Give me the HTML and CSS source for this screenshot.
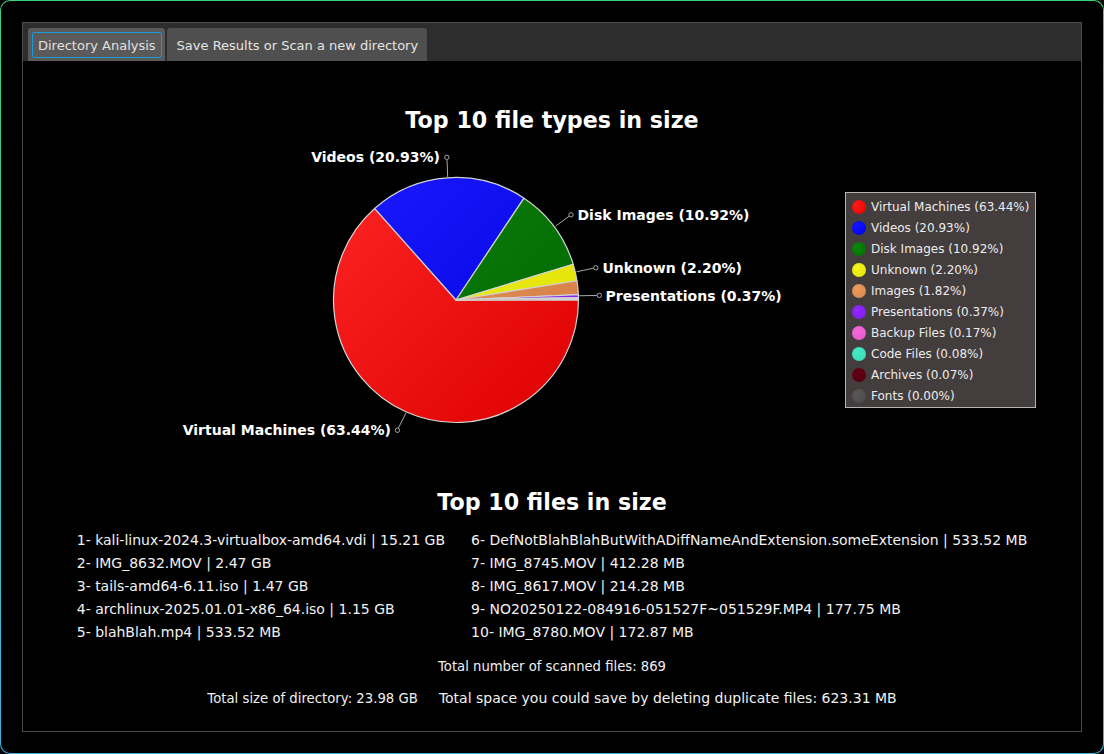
FILE: index.html
```html
<!DOCTYPE html>
<html lang="en">
<head>
<meta charset="utf-8">
<title>Directory Analysis</title>
<link rel="stylesheet" href="styles.css">
</head>
<body>
<div class="window">
  <div class="window-inner">
    <div class="tabwidget">
      <div class="tabbar">
        <div class="tab tab-active"><span class="focus">Directory Analysis</span></div>
        <div class="tab">Save Results or Scan a new directory</div>
      </div>
      <div class="pane">
        <h2 class="chart-title">Top 10 file types in size</h2>
        <div class="chart">
          <svg class="pie" width="1058" height="356" viewBox="0 0 1058 356" xmlns="http://www.w3.org/2000/svg">
            <defs>
              <linearGradient id="gRed" gradientUnits="userSpaceOnUse" x1="333" y1="177" x2="579" y2="423"><stop offset="0" stop-color="#ff2424"/><stop offset="1" stop-color="#dc0000"/></linearGradient>
              <linearGradient id="gBlue" gradientUnits="userSpaceOnUse" x1="333" y1="177" x2="579" y2="423"><stop offset="0" stop-color="#1a1aff"/><stop offset="1" stop-color="#0000dc"/></linearGradient>
              <linearGradient id="gGreen" gradientUnits="userSpaceOnUse" x1="333" y1="177" x2="579" y2="423"><stop offset="0" stop-color="#0c840c"/><stop offset="1" stop-color="#006400"/></linearGradient>
              <linearGradient id="gYellow" gradientUnits="userSpaceOnUse" x1="333" y1="177" x2="579" y2="423"><stop offset="0" stop-color="#f6f628"/><stop offset="1" stop-color="#dede00"/></linearGradient>
              <linearGradient id="gOrange" gradientUnits="userSpaceOnUse" x1="333" y1="177" x2="579" y2="423"><stop offset="0" stop-color="#ec9a60"/><stop offset="1" stop-color="#d07a40"/></linearGradient>
            </defs>
            <g transform="translate(-23 -133)">
              <g class="slices" stroke="#d2d2d2" stroke-width="1.2" stroke-linejoin="round">
                <path fill="url(#gRed)" d="M456,300 L578.5,300 A122.5,122.5 0 1 1 374.62,208.43 Z"/>
                <path fill="url(#gBlue)" d="M456,300 L374.62,208.43 A122.5,122.5 0 0 1 524.05,198.14 Z"/>
                <path fill="url(#gGreen)" d="M456,300 L524.05,198.14 A122.5,122.5 0 0 1 573.18,264.28 Z"/>
                <path fill="url(#gYellow)" d="M456,300 L573.18,264.28 A122.5,122.5 0 0 1 576.98,280.76 Z"/>
                <path fill="url(#gOrange)" d="M456,300 L576.98,280.76 A122.5,122.5 0 0 1 578.38,294.69 Z"/>
                <path fill="#8a22f2" d="M456,300 L578.38,294.69 A122.5,122.5 0 0 1 578.48,297.54 Z"/>
                <path fill="#ee5fd4" d="M456,300 L578.48,297.54 A122.5,122.5 0 0 1 578.5,298.85 Z"/>
                <path fill="#3ee0be" d="M456,300 L578.5,298.85 A122.5,122.5 0 0 1 578.5,299.46 Z"/>
                <path fill="#5a0010" d="M456,300 L578.5,299.46 L578.5,300 Z"/>
              </g>
              <g class="leaders" stroke="#a8a8a8" stroke-width="1" fill="#000">
                <line x1="447" y1="160" x2="447.7" y2="177.5"/>
                <circle cx="446.8" cy="157.3" r="2.2"/>
                <line x1="569" y1="216.3" x2="555.7" y2="226"/>
                <circle cx="571" cy="214.8" r="2.2"/>
                <line x1="593.5" y1="268.2" x2="576.5" y2="271.8"/>
                <circle cx="595.8" cy="267.8" r="2.2"/>
                <line x1="597" y1="295.4" x2="578.5" y2="295.8"/>
                <circle cx="599.3" cy="295.4" r="2.2"/>
                <line x1="398.4" y1="428" x2="406" y2="413"/>
                <circle cx="397.4" cy="430.3" r="2.2"/>
              </g>
              <g class="labels">
                <text x="440" y="162" text-anchor="end">Videos (20.93%)</text>
                <text x="577.5" y="220">Disk Images (10.92%)</text>
                <text x="602.5" y="273">Unknown (2.20%)</text>
                <text x="605.5" y="300.5">Presentations (0.37%)</text>
                <text x="391" y="435" text-anchor="end">Virtual Machines (63.44%)</text>
              </g>
            </g>
          </svg>
          <ul class="legend">
            <li><span class="dot c-vm"></span>Virtual Machines (63.44%)</li>
            <li><span class="dot c-videos"></span>Videos (20.93%)</li>
            <li><span class="dot c-disk"></span>Disk Images (10.92%)</li>
            <li><span class="dot c-unknown"></span>Unknown (2.20%)</li>
            <li><span class="dot c-images"></span>Images (1.82%)</li>
            <li><span class="dot c-pres"></span>Presentations (0.37%)</li>
            <li><span class="dot c-backup"></span>Backup Files (0.17%)</li>
            <li><span class="dot c-code"></span>Code Files (0.08%)</li>
            <li><span class="dot c-archives"></span>Archives (0.07%)</li>
            <li><span class="dot c-fonts"></span>Fonts (0.00%)</li>
          </ul>
        </div>
        <h2 class="files-title">Top 10 files in size</h2>
        <ol class="files">
          <li>1- kali-linux-2024.3-virtualbox-amd64.vdi | 15.21 GB</li>
          <li>2- IMG_8632.MOV | 2.47 GB</li>
          <li>3- tails-amd64-6.11.iso | 1.47 GB</li>
          <li>4- archlinux-2025.01.01-x86_64.iso | 1.15 GB</li>
          <li>5- blahBlah.mp4 | 533.52 MB</li>
          <li>6- DefNotBlahBlahButWithADiffNameAndExtension.someExtension | 533.52 MB</li>
          <li>7- IMG_8745.MOV | 412.28 MB</li>
          <li>8- IMG_8617.MOV | 214.28 MB</li>
          <li>9- NO20250122-084916-051527F~051529F.MP4 | 177.75 MB</li>
          <li>10- IMG_8780.MOV | 172.87 MB</li>
        </ol>
        <p class="total">Total number of scanned files: 869</p>
        <div class="summary">
          <span class="size">Total size of directory: 23.98 GB</span>
          <span class="dupes">Total space you could save by deleting duplicate files: 623.31 MB</span>
        </div>
      </div>
    </div>
  </div>
</div>
</body>
</html>
```

FILE: styles.css
```css
* { box-sizing: border-box; }

html, body {
  margin: 0;
  padding: 0;
  background: #000;
}

body {
  width: 1104px;
  height: 754px;
  font-family: "DejaVu Sans", "Liberation Sans", sans-serif;
  font-size: 13px;
  color: #f0f0f0;
  overflow: hidden;
}

.window {
  width: 1104px;
  height: 754px;
  padding: 1px;
  border-radius: 10px;
  background: linear-gradient(180deg, #33d37c 0%, #34c4b0 50%, #35b5e6 100%);
}

.window-inner {
  height: 100%;
  border-radius: 9px;
  background: #000;
  padding: 21px;
}

.tabwidget {
  height: 710px;
  border: 1px solid #4b4b4b;
  display: flex;
  flex-direction: column;
}

.tabbar {
  height: 38px;
  flex: none;
  background: #2d2d2d;
  padding: 5px 0 0 5px;
  display: flex;
  align-items: flex-end;
  gap: 2px;
}

.tab {
  height: 33px;
  display: flex;
  align-items: center;
  padding: 1px 9px 0 10px;
  background: #4f4f4f;
  color: #e4e4e4;
  border-radius: 3px 3px 0 0;
  white-space: nowrap;
}

.tab-active {
  background: #5a5a5a;
  padding: 4px 3px 3px 4px;
  color: #e0e0e0;
}

.focus {
  height: 100%;
  display: flex;
  align-items: center;
  padding: 1px 5px 0;
  border: 1px solid #1d9ad8;
  border-radius: 2px;
}

.pane {
  flex: 1;
  background: #000;
  padding-top: 46px;
}

.chart-title,
.files-title {
  margin: 0;
  font-size: 22.2px;
  line-height: 26px;
  font-weight: bold;
  color: #fff;
  text-align: center;
}

.chart {
  position: relative;
  height: 356px;
}

.pie {
  display: block;
}

.labels text {
  font-family: "DejaVu Sans", sans-serif;
  font-weight: bold;
  font-size: 14px;
  fill: #ffffff;
}

.legend {
  position: absolute;
  left: 822px;
  top: 59px;
  width: 191px;
  height: 216px;
  margin: 0;
  padding: 3px 0 0 6px;
  list-style: none;
  background: #443d3d;
  border: 1px solid #b4b4b4;
  font-size: 12px;
  color: #ececec;
}

.legend li {
  height: 21px;
  display: flex;
  align-items: center;
  gap: 5px;
  white-space: nowrap;
}

.dot {
  width: 14px;
  height: 14px;
  border-radius: 50%;
  flex: none;
}

.c-vm { background: radial-gradient(circle at 35% 35%, #ff1a1a, #e60000); }
.c-videos { background: radial-gradient(circle at 35% 35%, #1414ff, #0000e8); }
.c-disk { background: radial-gradient(circle at 35% 35%, #0b850b, #006e00); }
.c-unknown { background: radial-gradient(circle at 35% 35%, #f4f420, #e2e200); }
.c-images { background: radial-gradient(circle at 35% 35%, #e99a5e, #d9864a); }
.c-pres { background: radial-gradient(circle at 35% 35%, #9028fa, #801aee); }
.c-backup { background: radial-gradient(circle at 35% 35%, #f46ada, #e456cc); }
.c-code { background: radial-gradient(circle at 35% 35%, #48e8c6, #36d8b6); }
.c-archives { background: radial-gradient(circle at 35% 35%, #640014, #50000c); }
.c-fonts { background: radial-gradient(circle at 35% 35%, #585858, #484848); }

.files {
  margin: 14px 0 0;
  padding: 0;
  list-style: none;
  display: grid;
  grid-template-rows: repeat(5, 23px);
  grid-auto-flow: column;
  grid-auto-columns: auto;
  justify-content: center;
  column-gap: 26px;
  font-size: 14px;
  color: #f2f2f2;
}

.files li {
  line-height: 23px;
  white-space: nowrap;
}

.total {
  margin: 11px 0 0;
  line-height: 23px;
  font-size: 13.2px;
  text-align: center;
  color: #f0f0f0;
}

.summary {
  margin-top: 9px;
  line-height: 23px;
  display: flex;
  justify-content: center;
  align-items: baseline;
  gap: 21px;
  color: #f0f0f0;
}

.summary .size {
  font-size: 13.25px;
}

.summary .dupes {
  font-size: 14px;
}
```
